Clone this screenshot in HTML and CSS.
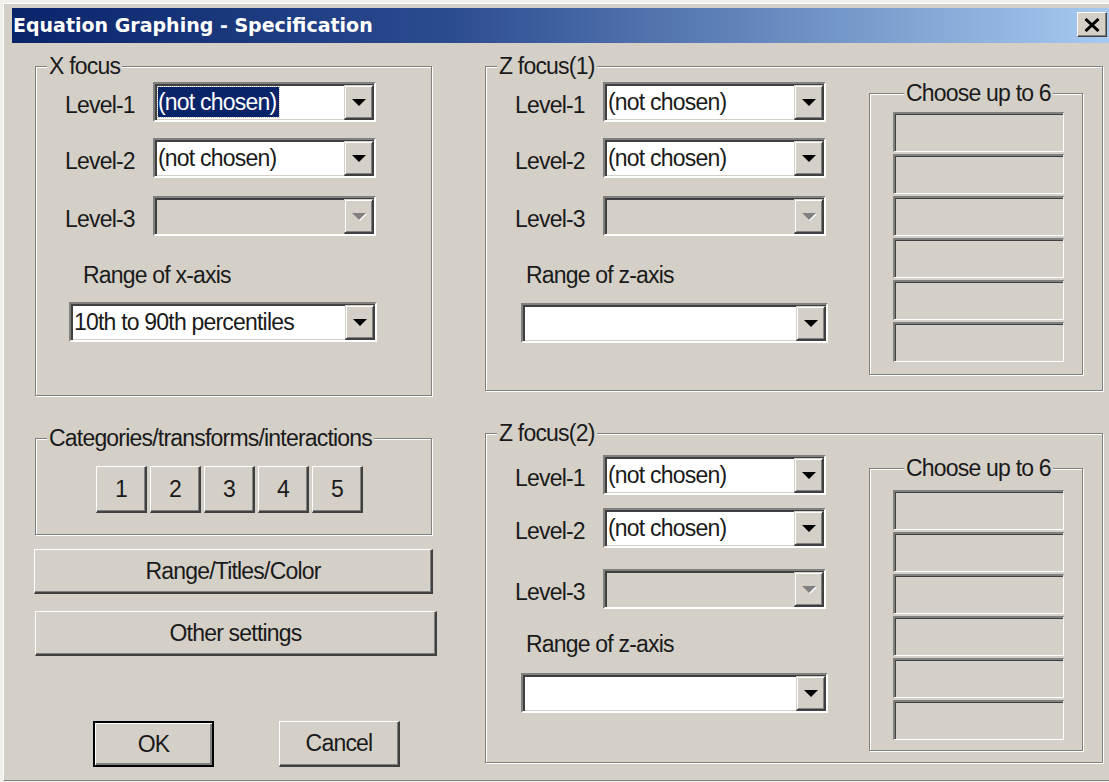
FILE: index.html
```html
<!DOCTYPE html>
<html lang="en">
<head>
<meta charset="utf-8">
<title>Equation Graphing - Specification</title>
<link rel="stylesheet" href="styles.css">
</head>
<body>
<div class="window">
  <div class="titlebar">
    <span class="title">Equation Graphing - Specification</span>
    <button class="close" aria-label="Close">
      <svg width="16" height="14" viewBox="0 0 16 14"><path d="M1.5 1 L14.5 13 M14.5 1 L1.5 13" stroke="#000" stroke-width="3" fill="none"/></svg>
    </button>
  </div>

  <div class="client">
    <div class="col-left">
      <fieldset class="group xfocus">
        <legend>X focus</legend>
        <div class="level-row">
          <span class="level-label">Level-1</span>
          <div class="combo"><span class="combo-value"><span class="selected">(not chosen)</span></span><span class="drop"><i class="arrow"></i></span></div>
        </div>
        <div class="level-row">
          <span class="level-label">Level-2</span>
          <div class="combo"><span class="combo-value">(not chosen)</span><span class="drop"><i class="arrow"></i></span></div>
        </div>
        <div class="level-row">
          <span class="level-label">Level-3</span>
          <div class="combo disabled"><span class="combo-value"></span><span class="drop"><i class="arrow"></i></span></div>
        </div>
        <div class="range-label">Range of x-axis</div>
        <div class="combo range-combo"><span class="combo-value">10th to 90th percentiles</span><span class="drop"><i class="arrow"></i></span></div>
      </fieldset>

      <fieldset class="group cats">
        <legend>Categories/transforms/interactions</legend>
        <div class="cat-buttons">
          <button class="btn cat">1</button>
          <button class="btn cat">2</button>
          <button class="btn cat">3</button>
          <button class="btn cat">4</button>
          <button class="btn cat">5</button>
        </div>
      </fieldset>

      <button class="btn wide range-btn">Range/Titles/Color</button>
      <button class="btn wide other-btn">Other settings</button>

      <div class="dialog-actions">
        <button class="btn action default">OK</button>
        <button class="btn action">Cancel</button>
      </div>
    </div>

    <div class="col-right">
      <fieldset class="group zfocus z1">
        <legend>Z focus(1)</legend>
        <div class="zbody">
          <div class="levels">
            <div class="level-row">
              <span class="level-label">Level-1</span>
              <div class="combo"><span class="combo-value">(not chosen)</span><span class="drop"><i class="arrow"></i></span></div>
            </div>
            <div class="level-row">
              <span class="level-label">Level-2</span>
              <div class="combo"><span class="combo-value">(not chosen)</span><span class="drop"><i class="arrow"></i></span></div>
            </div>
            <div class="level-row">
              <span class="level-label">Level-3</span>
              <div class="combo disabled"><span class="combo-value"></span><span class="drop"><i class="arrow"></i></span></div>
            </div>
            <div class="range-label">Range of z-axis</div>
            <div class="combo range-combo"><span class="combo-value"></span><span class="drop"><i class="arrow"></i></span></div>
          </div>
          <fieldset class="group choose">
            <legend>Choose up to 6</legend>
            <div class="slots">
              <div class="slot"></div><div class="slot"></div><div class="slot"></div>
              <div class="slot"></div><div class="slot"></div><div class="slot"></div>
            </div>
          </fieldset>
        </div>
      </fieldset>

      <fieldset class="group zfocus z2">
        <legend>Z focus(2)</legend>
        <div class="zbody">
          <div class="levels">
            <div class="level-row">
              <span class="level-label">Level-1</span>
              <div class="combo"><span class="combo-value">(not chosen)</span><span class="drop"><i class="arrow"></i></span></div>
            </div>
            <div class="level-row">
              <span class="level-label">Level-2</span>
              <div class="combo"><span class="combo-value">(not chosen)</span><span class="drop"><i class="arrow"></i></span></div>
            </div>
            <div class="level-row">
              <span class="level-label">Level-3</span>
              <div class="combo disabled"><span class="combo-value"></span><span class="drop"><i class="arrow"></i></span></div>
            </div>
            <div class="range-label">Range of z-axis</div>
            <div class="combo range-combo"><span class="combo-value"></span><span class="drop"><i class="arrow"></i></span></div>
          </div>
          <fieldset class="group choose">
            <legend>Choose up to 6</legend>
            <div class="slots">
              <div class="slot"></div><div class="slot"></div><div class="slot"></div>
              <div class="slot"></div><div class="slot"></div><div class="slot"></div>
            </div>
          </fieldset>
        </div>
      </fieldset>
    </div>
  </div>
</div>
</body>
</html>
```

FILE: styles.css
```css
/* Classic 3D dialog palette */
:root {
  --face: #d4d0c8;
  --light: #ffffff;
  --shadow: #808080;
  --dark: #404040;
  --navy: #0a246a;
}

html, body {
  margin: 0;
  padding: 0;
}

body {
  width: 1109px;
  height: 782px;
  overflow: hidden;
  background: #f1f0ec;
  font-family: "Liberation Sans", Arial, sans-serif;
  font-size: 23px;
  letter-spacing: -0.8px;
  color: #1a1a1a;
}

/* ---------- window frame ---------- */
.window {
  box-sizing: border-box;
  margin: 3px 0 0 3px;
  height: 778px;
  padding: 4px 0 0 8px;
  background: var(--face);
  border-top: 1px solid var(--light);
  border-left: 1px solid var(--light);
  border-bottom: 1px solid var(--shadow);
}

.titlebar {
  display: flex;
  align-items: flex-start;
  height: 35px;
  background: linear-gradient(to right, #0a246a 0%, #2c4c90 40%, #a6caf0 100%);
}

.title {
  flex: 1;
  padding-left: 1px;
  color: #fff;
  font-family: "DejaVu Sans", Verdana, sans-serif;
  font-weight: bold;
  font-size: 19px;
  letter-spacing: 0;
  line-height: 35px;
  white-space: nowrap;
}

.close {
  box-sizing: border-box;
  width: 30px;
  height: 25px;
  margin: 4px 2px 0 0;
  padding: 0;
  display: flex;
  align-items: center;
  justify-content: center;
  background: var(--face);
  border: 1px solid;
  border-color: var(--light) var(--dark) var(--dark) var(--light);
  box-shadow: inset -1px -1px var(--shadow);
}

/* ---------- client area ---------- */
.client {
  display: flex;
  padding: 11px 0 0 23px;
}

.col-left {
  width: 397px;
  display: flex;
  flex-direction: column;
}

.col-right {
  width: 618px;
  margin-left: 53px;
  display: flex;
  flex-direction: column;
}

/* etched group box */
.group {
  margin: 0;
  padding: 0;
  min-width: 0;
  border: 1px solid var(--shadow);
  box-shadow: inset 1px 1px var(--light), 1px 1px var(--light);
}

.group > legend {
  margin-left: 11px;
  padding: 0 2px;
  line-height: 24px;
  background: var(--face);
  white-space: nowrap;
}

/* ---------- label + combo rows ---------- */
.level-row {
  display: flex;
  align-items: flex-start;
  margin-top: 16px;
}
.level-row:first-child,
.xfocus > .level-row:first-of-type {
  margin-top: 4px;
}
.level-row:nth-of-type(3) {
  margin-top: 18px;
}

.level-label {
  width: 88px;
  padding-left: 29px;
  margin-top: 11px;
  line-height: 24px;
  white-space: nowrap;
}

.range-label {
  margin-top: 27px;
  line-height: 24px;
  white-space: nowrap;
}

.combo {
  box-sizing: border-box;
  display: flex;
  width: 223px;
  height: 40px;
  background: #fff;
  border: 2px solid;
  border-color: var(--shadow) var(--light) var(--light) var(--shadow);
  box-shadow: inset 2px 2px var(--dark), inset -1px -1px var(--face);
}

.combo.disabled {
  background: var(--face);
}

.combo-value {
  flex: 1;
  padding-left: 3px;
  line-height: 36px;
  white-space: nowrap;
  overflow: hidden;
}

.selected {
  background: var(--navy);
  color: #fff;
  padding: 2px 3px 2px 0;
  outline: 1px dotted #c9c4b8;
}

.drop {
  box-sizing: border-box;
  width: 30px;
  height: 35px;
  margin-top: 1px;
  display: flex;
  align-items: center;
  justify-content: center;
  background: var(--face);
  border-style: solid;
  border-width: 1px 2px 2px 1px;
  border-color: var(--face) var(--dark) var(--dark) var(--face);
  box-shadow: inset 1px 1px var(--light), inset -1px -1px var(--shadow);
}

.arrow {
  width: 0;
  height: 0;
  border-left: 7px solid transparent;
  border-right: 7px solid transparent;
  border-top: 7px solid #000;
  margin-top: 1px;
}

.disabled .arrow {
  border-top-color: var(--shadow);
  filter: drop-shadow(1px 1px 0 #fff);
}

/* X focus specifics */
.xfocus {
  padding-bottom: 53px;
}
.xfocus .range-label {
  padding-left: 47px;
}
.xfocus .range-combo {
  width: 308px;
  margin-left: 33px;
  margin-top: 15px;
}

/* ---------- raised push buttons ---------- */
.btn {
  box-sizing: border-box;
  margin: 0;
  padding: 0;
  font: inherit;
  letter-spacing: inherit;
  color: inherit;
  background: var(--face);
  border-style: solid;
  border-width: 1px 2px 2px 1px;
  border-color: var(--light) var(--dark) var(--dark) var(--light);
  box-shadow: inset -1px -1px var(--shadow);
}

.cats {
  margin-top: 30px;
  padding-bottom: 21px;
}

.cat-buttons {
  display: flex;
  gap: 3px;
  margin-top: 16px;
  padding-left: 60px;
}

.btn.cat {
  width: 51px;
  height: 47px;
}

.btn.wide {
  height: 45px;
}
.range-btn {
  margin-top: 14px;
  width: 399px;
  margin-left: -1px;
}
.other-btn {
  margin-top: 17px;
  width: 402px;
}

.dialog-actions {
  display: flex;
  gap: 65px;
  margin-top: 65px;
  padding-left: 58px;
}

.btn.action {
  width: 121px;
  height: 46px;
}

.btn.default {
  border: 2px solid #000;
  box-shadow: inset 1px 1px var(--light), inset -2px -2px var(--shadow);
}

/* ---------- Z focus groups ---------- */
.zbody {
  display: flex;
  align-items: flex-start;
}

.levels {
  width: 345px;
}

.zfocus .range-label {
  padding-left: 40px;
}
.zfocus .range-combo {
  width: 307px;
  margin-left: 35px;
  margin-top: 16px;
}

.z2 {
  margin-top: 30px;
}
.z2 .level-row:first-child {
  margin-top: 10px;
}
.z2 .level-row:nth-child(2) {
  margin-top: 13px;
}
.z2 .level-row:nth-child(3) {
  margin-top: 21px;
}
.z2 .range-label {
  margin-top: 23px;
}
.z2 .range-combo {
  margin-top: 17px;
}

/* "Choose up to 6" boxes */
.choose {
  width: 214px;
  box-sizing: border-box;
  margin: 3px 19px 15px auto;
  padding: 0 18px 12px 23px;
}
.z2 .choose {
  margin-top: 11px;
  margin-bottom: 11px;
  padding-bottom: 10px;
}

.slots {
  display: flex;
  flex-direction: column;
  gap: 2px;
  margin-top: 7px;
}
.z2 .slots {
  margin-top: 10px;
}

.slot {
  box-sizing: border-box;
  height: 40px;
  border-style: solid;
  border-width: 2px 1px 1px 2px;
  border-color: var(--shadow) var(--light) var(--light) var(--shadow);
  box-shadow: inset 1px 1px var(--dark);
}
```
